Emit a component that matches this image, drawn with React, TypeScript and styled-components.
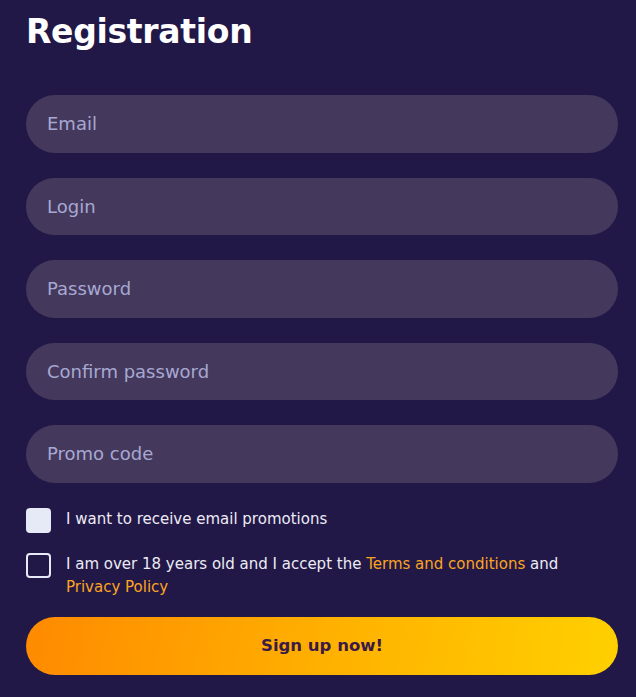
import * as React from "react";
import styled, { createGlobalStyle } from "styled-components";

const GlobalStyle = createGlobalStyle`
    html, body {
        margin: 0;
        padding: 0;
        background: #221847;
    }
    * {
        box-sizing: border-box;
    }
`

const Page = styled.div`
    font-family: "DejaVu Sans", "Noto Sans", sans-serif;
    background: #221847;
    min-height: 697px;
    padding: 10px 18px 20px 26px;
    color: #ffffff;
`

const Title = styled.h1`
    margin: 0 0 41px 0;
    font-size: 33px;
    font-weight: 700;
    line-height: 44px;
    letter-spacing: -0.3px;
`

const Form = styled.form`
    display: flex;
    flex-direction: column;
`

const Fields = styled.div`
    display: flex;
    flex-direction: column;
    gap: 25px;
    margin-bottom: 25px;
`

const Input = styled.input`
    height: 57.5px;
    width: 100%;
    border: none;
    outline: none;
    border-radius: 29px;
    background: #44395c;
    padding: 0 21px;
    font-family: inherit;
    font-size: 18px;
    color: #ffffff;
    &::placeholder {
        color: #a7a8d2;
    }
`

const CheckRow = styled.label<{ $gap: number }>`
    display: flex;
    align-items: flex-start;
    gap: 15px;
    margin-bottom: ${(p) => p.$gap}px;
    cursor: pointer;
`

const Box = styled.span<{ $checked?: boolean }>`
    flex: 0 0 25px;
    width: 25px;
    height: 25px;
    border-radius: 4px;
    background: ${(p) => (p.$checked ? "#e6e9f6" : "transparent")};
    border: 2px solid #e6e9f6;
`

const CheckText = styled.span`
    max-width: 505px;
    font-size: 15px;
    line-height: 23px;
    color: #ecebf5;
`

const Link = styled.a`
    color: #fca41f;
    text-decoration: none;
`

const Button = styled.button`
    height: 58px;
    width: 100%;
    border: none;
    border-radius: 29px;
    background: linear-gradient(100deg, #ff8a00 0%, #ffb000 50%, #ffd000 100%);
    font-family: inherit;
    font-size: 16.5px;
    font-weight: 700;
    color: #3b1a48;
    cursor: pointer;
`

export default function App() {
    const [promo, setPromo] = React.useState<boolean>(true);
    const [adult, setAdult] = React.useState<boolean>(false);
    return (
        <Page>
            <GlobalStyle />
            <Title>Registration</Title>
            <Form onSubmit={(ev: React.FormEvent) => ev.preventDefault()}>
                <Fields>
                    <Input type="email" placeholder="Email" />
                    <Input type="text" placeholder="Login" />
                    <Input type="password" placeholder="Password" />
                    <Input type="password" placeholder="Confirm password" />
                    <Input type="text" placeholder="Promo code" />
                </Fields>
                <CheckRow $gap={20} onClick={() => setPromo(!promo)}>
                    <Box $checked={promo} />
                    <CheckText>I want to receive email promotions</CheckText>
                </CheckRow>
                <CheckRow $gap={18} onClick={() => setAdult(!adult)}>
                    <Box $checked={adult} />
                    <CheckText>
                        I am over 18 years old and I accept the <Link href="#">Terms and conditions</Link> and{" "}
                        <Link href="#">Privacy Policy</Link>
                    </CheckText>
                </CheckRow>
                <Button type="submit">Sign up now!</Button>
            </Form>
        </Page>
    );
}
